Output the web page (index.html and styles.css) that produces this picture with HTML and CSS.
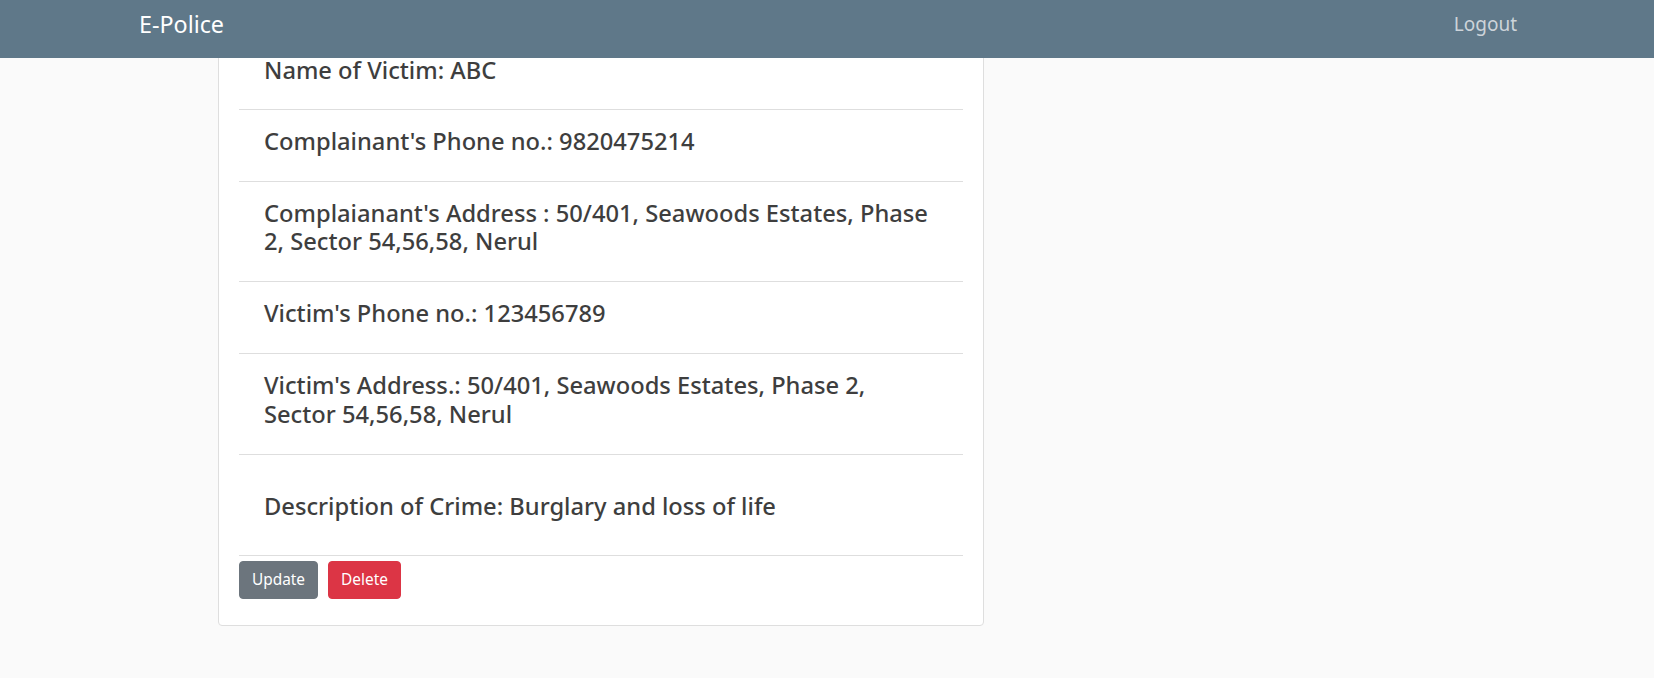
FILE: index.html
```html
<!DOCTYPE html>
<html>
<head>
<meta charset="utf-8">
<link rel="stylesheet" href="styles.css">
</head>
<body>
<nav class="navbar">
  <a class="brand">E-Police</a>
  <a class="logout">Logout</a>
</nav>
<main class="page">
  <section class="card">
    <div class="item first"><h4>Name of Victim: ABC</h4></div>
    <div class="item"><h4>Complainant's Phone no.: 9820475214</h4></div>
    <div class="item"><h4>Complaianant's Address : 50/401, Seawoods Estates, Phase 2, Sector 54,56,58, Nerul</h4></div>
    <div class="item"><h4>Victim's Phone no.: 123456789</h4></div>
    <div class="item"><h4>Victim's Address.: 50/401, Seawoods Estates, Phase 2, Sector 54,56,58, Nerul</h4></div>
    <div class="item desc"><h4>Description of Crime: Burglary and loss of life</h4></div>
    <div class="actions">
      <button class="btn btn-secondary">Update</button>
      <button class="btn btn-danger">Delete</button>
    </div>
  </section>
</main>
</body>
</html>
```
FILE: styles.css
```css
* { box-sizing: border-box; }
html, body { margin: 0; padding: 0; }
body {
  background: #fafafa;
  font-family: "Noto Sans", "Open Sans", sans-serif;
  color: #3e3e3e;
}
.navbar {
  position: fixed;
  top: 0; left: 0; right: 0;
  height: 58px;
  z-index: 10;
  background: #5f7889;
  display: flex;
  align-items: flex-start;
  justify-content: space-between;
  padding: 9px 137px 0 139px;
}
.brand { color: #fff; font-size: 23.3px; line-height: 30px; }
.logout { color: #cdd4da; font-size: 19px; line-height: 30px; margin-top: -0.5px; }
.page { padding-top: 38px; padding-bottom: 53px; }
.card {
  margin-left: 218px;
  width: 766px;
  background: #fff;
  border: 1px solid #dedede;
  border-radius: 4px;
  padding: 0 20px 26px;
}
.item {
  border-bottom: 1px solid #dedede;
  padding: 17px 20px 25px 25px;
}
.item.first { padding-bottom: 24px; }
.item.desc { padding-top: 37px; padding-bottom: 35px; }
.item h4 {
  margin: 0;
  font-size: 23.7px;
  font-weight: 500;
  line-height: 28.8px;
}
.actions { display: flex; gap: 10px; padding-top: 5px; }
.btn {
  font-family: inherit;
  font-size: 15.4px;
  line-height: 24px;
  padding: 6px 12px;
  border: 1px solid transparent;
  border-radius: 4px;
  color: #fff;
}
.btn-secondary { background: #6c757d; border-color: #6c757d; }
.btn-danger { background: #dc3545; border-color: #dc3545; }
```
